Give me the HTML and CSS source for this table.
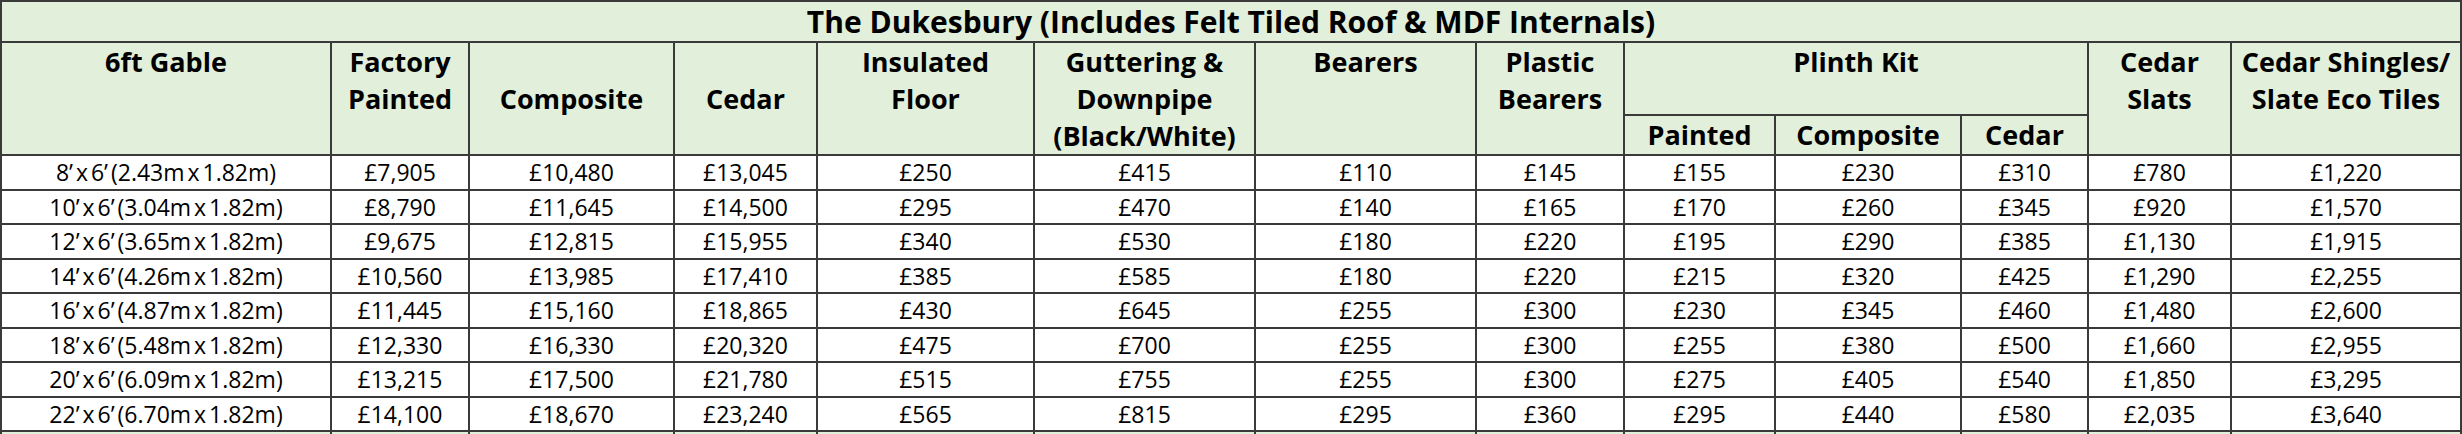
FILE: index.html
```html
<!DOCTYPE html>
<html>
<head>
<meta charset="utf-8">
<link rel="stylesheet" href="styles.css">
</head>
<body>
<table class="price">
  <colgroup>
    <col class="c-size"><col class="c-fp"><col class="c-comp"><col class="c-cedar"><col class="c-ins"><col class="c-gut"><col class="c-bear"><col class="c-pbear"><col class="c-pp"><col class="c-pc"><col class="c-pcd"><col class="c-slats"><col class="c-shing">
  </colgroup>
  <thead>
    <tr class="title-row"><th colspan="13" class="title">The Dukesbury (Includes Felt Tiled Roof &amp; MDF Internals)</th></tr>
    <tr class="head-a">
      <th rowspan="2" class="top">6ft Gable</th>
      <th rowspan="2" class="top">Factory<br>Painted</th>
      <th rowspan="2" class="mid">Composite</th>
      <th rowspan="2" class="mid">Cedar</th>
      <th rowspan="2" class="top">Insulated<br>Floor</th>
      <th rowspan="2" class="top">Guttering &amp;<br>Downpipe<br>(Black/White)</th>
      <th rowspan="2" class="top">Bearers</th>
      <th rowspan="2" class="top">Plastic<br>Bearers</th>
      <th colspan="3" class="top">Plinth Kit</th>
      <th rowspan="2" class="top">Cedar<br>Slats</th>
      <th rowspan="2" class="top">Cedar Shingles/<br>Slate Eco Tiles</th>
    </tr>
    <tr class="head-b">
      <th class="mid">Painted</th>
      <th class="mid">Composite</th>
      <th class="mid">Cedar</th>
    </tr>
  </thead>
  <tbody>
    <tr><td class="size">8’ x 6’ (2.43m x 1.82m)</td><td>£7,905</td><td>£10,480</td><td>£13,045</td><td>£250</td><td>£415</td><td>£110</td><td>£145</td><td>£155</td><td>£230</td><td>£310</td><td>£780</td><td>£1,220</td></tr>
    <tr><td class="size">10’ x 6’ (3.04m x 1.82m)</td><td>£8,790</td><td>£11,645</td><td>£14,500</td><td>£295</td><td>£470</td><td>£140</td><td>£165</td><td>£170</td><td>£260</td><td>£345</td><td>£920</td><td>£1,570</td></tr>
    <tr><td class="size">12’ x 6’ (3.65m x 1.82m)</td><td>£9,675</td><td>£12,815</td><td>£15,955</td><td>£340</td><td>£530</td><td>£180</td><td>£220</td><td>£195</td><td>£290</td><td>£385</td><td>£1,130</td><td>£1,915</td></tr>
    <tr><td class="size">14’ x 6’ (4.26m x 1.82m)</td><td>£10,560</td><td>£13,985</td><td>£17,410</td><td>£385</td><td>£585</td><td>£180</td><td>£220</td><td>£215</td><td>£320</td><td>£425</td><td>£1,290</td><td>£2,255</td></tr>
    <tr><td class="size">16’ x 6’ (4.87m x 1.82m)</td><td>£11,445</td><td>£15,160</td><td>£18,865</td><td>£430</td><td>£645</td><td>£255</td><td>£300</td><td>£230</td><td>£345</td><td>£460</td><td>£1,480</td><td>£2,600</td></tr>
    <tr><td class="size">18’ x 6’ (5.48m x 1.82m)</td><td>£12,330</td><td>£16,330</td><td>£20,320</td><td>£475</td><td>£700</td><td>£255</td><td>£300</td><td>£255</td><td>£380</td><td>£500</td><td>£1,660</td><td>£2,955</td></tr>
    <tr><td class="size">20’ x 6’ (6.09m x 1.82m)</td><td>£13,215</td><td>£17,500</td><td>£21,780</td><td>£515</td><td>£755</td><td>£255</td><td>£300</td><td>£275</td><td>£405</td><td>£540</td><td>£1,850</td><td>£3,295</td></tr>
    <tr><td class="size">22’ x 6’ (6.70m x 1.82m)</td><td>£14,100</td><td>£18,670</td><td>£23,240</td><td>£565</td><td>£815</td><td>£295</td><td>£360</td><td>£295</td><td>£440</td><td>£580</td><td>£2,035</td><td>£3,640</td></tr>
    <tr class="next-row"><td></td><td></td><td></td><td></td><td></td><td></td><td></td><td></td><td></td><td></td><td></td><td></td><td></td></tr>
  </tbody>
</table>
</body>
</html>
```

FILE: styles.css
```css
html, body {
  margin: 0;
  padding: 0;
  background: #ffffff;
}

body {
  font-family: "Open Sans", "Liberation Sans", sans-serif;
  color: #000;
  overflow: hidden;
}

.price {
  border-collapse: collapse;
  table-layout: fixed;
  width: 2462px;
}

.price th,
.price td {
  border: 2px solid #3a3a3a;
  padding: 0;
  text-align: center;
  white-space: nowrap;
  overflow: hidden;
}

.c-size { width: 330px; }
.c-fp { width: 138px; }
.c-comp { width: 205px; }
.c-cedar { width: 143px; }
.c-ins { width: 217px; }
.c-gut { width: 221px; }
.c-bear { width: 221px; }
.c-pbear { width: 148px; }
.c-pp { width: 151px; }
.c-pc { width: 186px; }
.c-pcd { width: 127px; }
.c-slats { width: 143px; }
.c-shing { width: 230px; }

.price thead th {
  background: #e2efda;
  font-weight: 700;
  font-size: 27px;
  line-height: 37px;
}

.title-row { height: 41px; }
.price th.title {
  font-size: 30px;
  line-height: 38px;
  vertical-align: middle;
}

.head-a { height: 72px; }
.head-b { height: 40px; }

.price th.top { vertical-align: top; }
.price th.mid { vertical-align: middle; }

.price tbody td {
  height: 32.5px;
  font-size: 23px;
  line-height: 30px;
  vertical-align: middle;
  background: #ffffff;
}

.price tbody td.size {
  word-spacing: -3px;
}

.price tbody tr.next-row td {
  background: #e2efda;
  height: 40px;
}
```
